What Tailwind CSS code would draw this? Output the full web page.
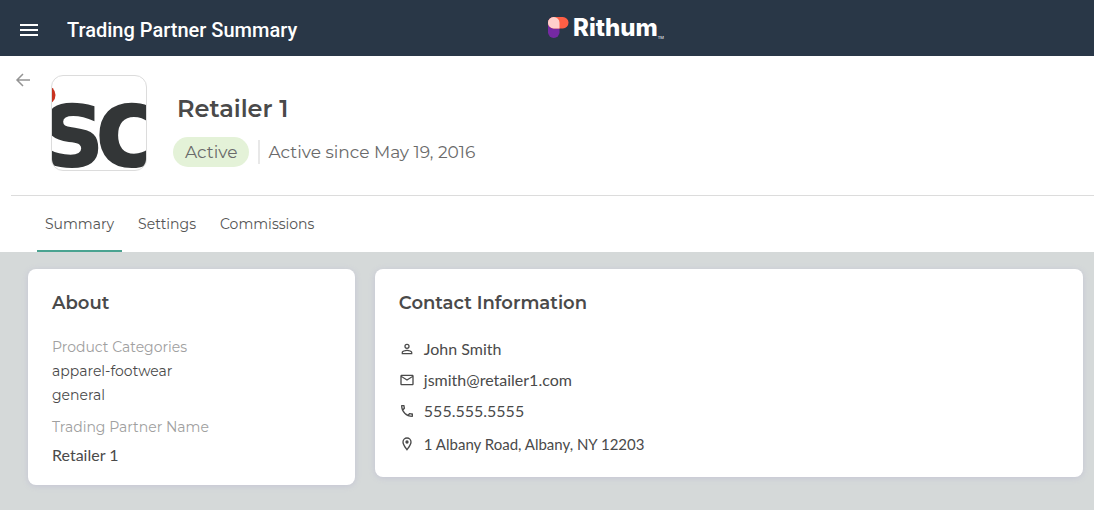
<!DOCTYPE html>
<html lang="en">
<head>
<meta charset="utf-8">
<meta name="viewport" content="width=device-width, initial-scale=1">
<title>Trading Partner Summary</title>
<script src="https://cdn.jsdelivr.net/npm/@tailwindcss/browser@4"></script>
</head>
<body class="flex min-h-screen flex-col bg-[#d5d9d9] font-['Montserrat','Inter',sans-serif] text-[#4a4a4a]">
<header class="relative flex h-14 shrink-0 items-center bg-[#293747] pt-1 pl-5 text-white">
  <button type="button" aria-label="Open menu" class="flex w-[18px] flex-col gap-[3px]">
    <span class="h-0.5 w-full bg-white"></span><span class="h-0.5 w-full bg-white"></span><span class="h-0.5 w-full bg-white"></span>
  </button>
  <h1 class="ml-[29px] font-['Roboto',sans-serif] text-xl font-medium">Trading Partner Summary</h1>
  <a href="#" aria-label="Rithum" class="absolute top-3 left-1/2 flex items-start gap-1">
    <svg class="mt-[5px]" width="22" height="22" viewBox="0 0 22 22" aria-hidden="true">
      <rect x="1" y="0" width="11.500" height="21" rx="5.700" fill="#7529a3"/>
      <rect x="1" y="0" width="20.500" height="11.500" rx="5.700" fill="#ff5f45"/>
      <path d="M6.700 0h.1a5.700 5.700 0 0 1 5.700 5.700v5.800H6.700A5.700 5.700 0 0 1 6.700 0Z" fill="#ffd0cb"/>
    </svg>
    <span class="font-['Inter',sans-serif] text-2xl font-extrabold">Rithum</span>
    <span class="-ml-1 self-end pb-1 font-['Inter',sans-serif] text-[4px] leading-none">TM</span>
  </a>
</header>

<main class="flex grow flex-col">
  <section class="bg-white pl-[11px]">
    <div class="flex h-35 items-start border-b border-[#dcdcdc] pt-[17px]">
      <a href="#" aria-label="Back" class="ml-1 block">
        <svg class="size-4" viewBox="0 0 16 16" fill="none" stroke="#949494" stroke-width="1.500" aria-hidden="true"><path d="M15 7H2M8 1 2 7l6 6"/></svg>
      </a>
      <div class="mt-0.5 ml-5 size-24 overflow-hidden rounded-xl border border-[#dcdcdc]">
        <svg class="size-full" viewBox="0 0 94 94" role="img" aria-label="Retailer logo">
          <circle cx="-6" cy="19" r="9.500" fill="#c8321f"/>
          <g font-size="114" class="fill-[#333637] font-['DejaVu_Sans_Condensed','DejaVu_Sans',sans-serif] font-bold">
            <text x="-10" y="90">s</text>
            <text x="43" y="90">c</text>
          </g>
        </svg>
      </div>
      <div class="mt-5 ml-[26px] flex flex-col gap-3">
        <h2 class="ml-1 text-2xl font-semibold">Retailer 1</h2>
        <div class="flex items-center text-[17px] leading-6 text-[#6a6a6a]">
          <span class="rounded-full bg-[#e4f2d8] px-3 py-[3px]">Active</span>
          <span class="ml-[9px] border-l-2 border-[#e8e8e8] pl-2">Active since May 19, 2016</span>
        </div>
      </div>
    </div>
    <nav aria-label="Partner sections" class="flex h-14 items-stretch gap-2 pl-[26px] text-sm text-[#555]">
      <a href="#" aria-current="page" class="flex items-center border-b-2 border-[#4aa391] px-2 pt-0.5">Summary</a>
      <a href="#" class="flex items-center px-2">Settings</a>
      <a href="#" class="flex items-center px-2">Commissions</a>
    </nav>
  </section>

  <div class="grid grid-cols-[6fr_13fr] items-start gap-5 py-[17px] pr-[11px] pl-7">
    <section class="rounded-lg bg-white px-6 pt-5 pb-[18px] shadow-[0_1px_6px_#c4c5d4]">
      <h3 class="text-lg font-semibold">About</h3>
      <dl class="mt-[18px] text-sm leading-6">
        <dt class="text-[#a0a0a0]">Product Categories</dt>
        <dd>apparel-footwear</dd>
        <dd>general</dd>
        <dt class="mt-2 text-[#a0a0a0]">Trading Partner Name</dt>
        <dd class="mt-1 font-['Lato',sans-serif] text-base">Retailer 1</dd>
      </dl>
    </section>
    <section class="rounded-lg bg-white px-6 pt-5 pb-[21px] shadow-[0_1px_6px_#c4c5d4]">
      <h3 class="text-lg font-semibold">Contact Information</h3>
      <ul class="mt-5 flex flex-col gap-[7px] font-['Lato',sans-serif] text-base">
        <li class="flex items-center gap-[9px]">
          <svg class="size-4" viewBox="0 0 24 24" fill="#4a4a4a" aria-hidden="true"><path d="M12 5.900a2.100 2.100 0 1 1 0 4.200 2.100 2.100 0 0 1 0-4.200m0 9c2.970 0 6.100 1.460 6.100 2.100v1.100H5.900V17c0-.64 3.130-2.100 6.100-2.100M12 4a4 4 0 1 0 0 8 4 4 0 0 0 0-8m0 9c-2.670 0-8 1.340-8 4v3h16v-3c0-2.660-5.330-4-8-4Z"/></svg>
          John Smith</li>
        <li class="flex items-center gap-[9px]">
          <svg class="size-4" viewBox="0 0 24 24" fill="#4a4a4a" aria-hidden="true"><path d="M22 6c0-1.100-.9-2-2-2H4c-1.100 0-2 .9-2 2v12c0 1.100.9 2 2 2h16c1.100 0 2-.9 2-2V6Zm-2 0-8 5-8-5h16Zm0 12H4V8l8 5 8-5v10Z"/></svg>
          jsmith@retailer1.com</li>
        <li class="flex items-center gap-[9px]">
          <svg class="size-4" viewBox="0 0 24 24" fill="#4a4a4a" aria-hidden="true"><path d="M6.540 5c.06.890.21 1.760.45 2.590l-1.200 1.200c-.41-1.200-.67-2.470-.76-3.790h1.510m9.860 12.020c.85.240 1.720.390 2.600.450v1.490c-1.320-.09-2.590-.35-3.800-.75l1.200-1.190M7.500 3H4c-.55 0-1 .45-1 1 0 9.390 7.610 17 17 17 .55 0 1-.45 1-1v-3.490c0-.55-.45-1-1-1-1.240 0-2.450-.2-3.570-.57a1 1 0 0 0-1.020.24l-2.200 2.200a15.150 15.150 0 0 1-6.590-6.590l2.200-2.200c.28-.28.36-.67.25-1.020A11.360 11.360 0 0 1 8.500 4c0-.55-.45-1-1-1Z"/></svg>
          555.555.5555</li>
        <li class="mt-0.5 flex items-center gap-[9px] text-[15px] leading-6">
          <svg class="size-4" viewBox="0 0 24 24" fill="#4a4a4a" aria-hidden="true"><path d="M12 2a7 7 0 0 0-7 7c0 5.250 7 13 7 13s7-7.750 7-13a7 7 0 0 0-7-7ZM7 9a5 5 0 0 1 10 0c0 2.880-2.880 7.190-5 9.880C9.920 16.210 7 11.850 7 9Z"/><circle cx="12" cy="9" r="2.500"/></svg>
          1 Albany Road, Albany, NY 12203</li>
      </ul>
    </section>
  </div>
</main>
</body>
</html>
